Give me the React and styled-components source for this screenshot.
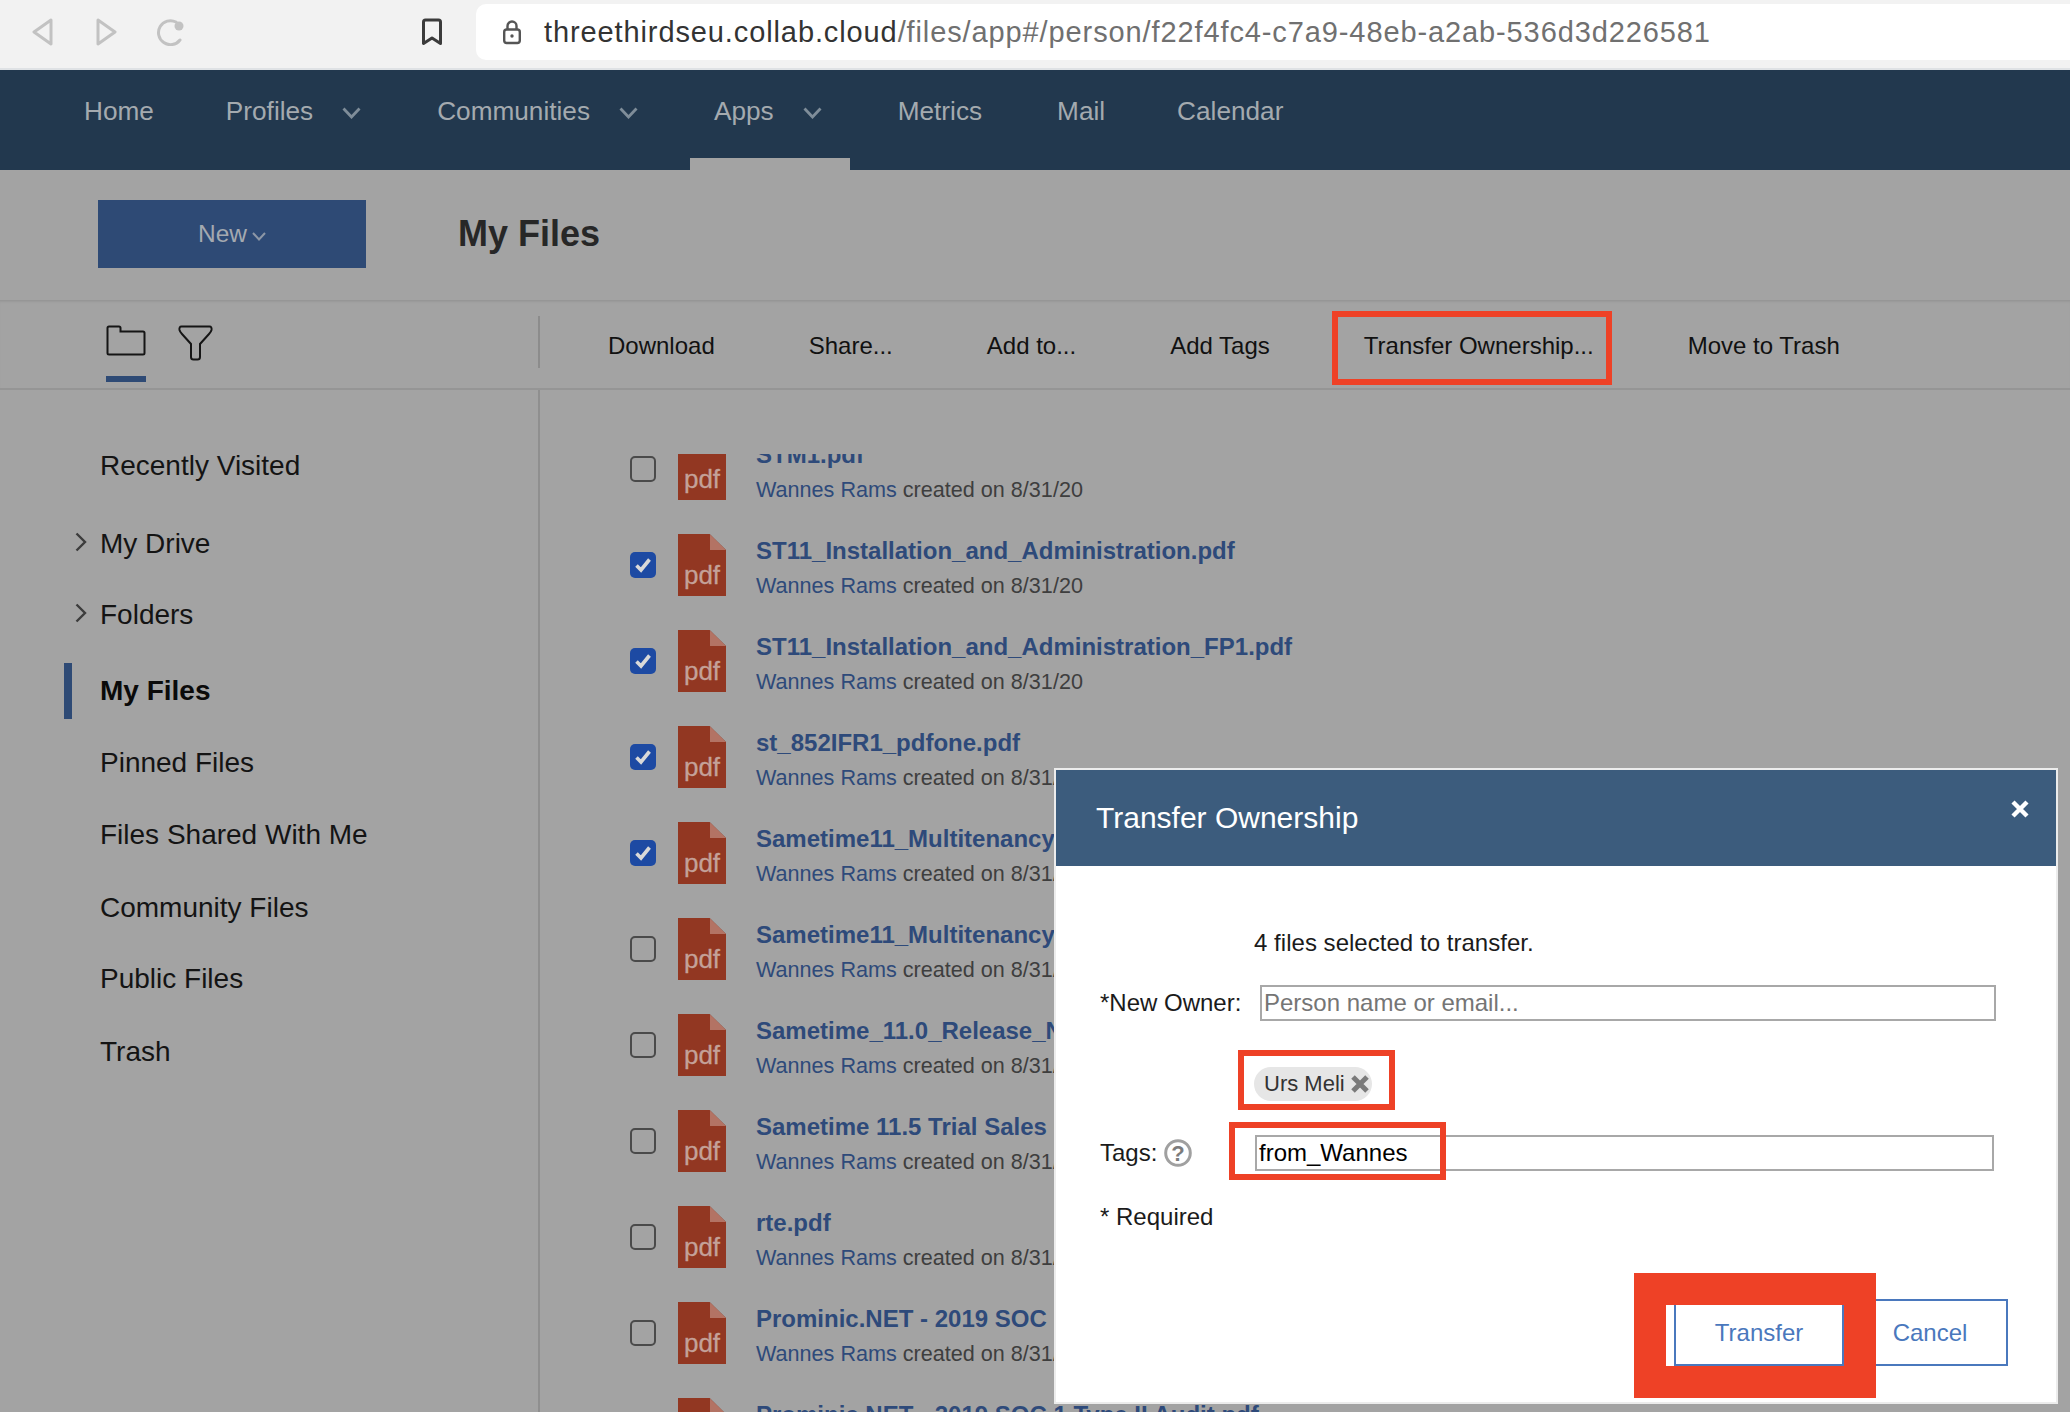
import React from "react";
import styled, { createGlobalStyle } from "styled-components";

const Global = createGlobalStyle`
  html, body { margin: 0; padding: 0; }
  body { width: 2070px; height: 1412px; overflow: hidden; background: #a3a3a3; font-family: "Liberation Sans", Arial, sans-serif; }
  * { box-sizing: border-box; }
`;

const Page = styled.div`
  position: relative;
  width: 2070px;
  height: 1412px;
  overflow: hidden;
  display: flex;
  flex-direction: column;
`;

/* Browser chrome */
const BrowserBar = styled.div`
  height: 70px;
  flex: none;
  display: flex;
  align-items: flex-start;
  background: #f2f2f2;
  border-bottom: 2px solid #dfe2e5;
`;
const ChromeIcon = styled.svg`
  flex: none;
  margin-top: 18px;
  margin-left: ${(p) => p.$ml}px;
  fill: none;
`;
const UrlField = styled.div`
  flex: 1;
  height: 56px;
  margin: 4px 0 0 33px;
  display: flex;
  align-items: center;
  padding-left: 27px;
  background: #fff;
  border-radius: 10px 0 0 10px;
`;
const UrlText = styled.div`
  margin-left: 23px;
  font-size: 29px;
  letter-spacing: 0.89px;
  color: #707070;
  white-space: nowrap;
  & > b { font-weight: 400; color: #333; }
`;

/* Main nav */
const Nav = styled.nav`
  height: 100px;
  flex: none;
  display: flex;
  padding-left: 60px;
  background: #22384e;
`;
const NavItem = styled.div`
  height: 100px;
  margin-right: ${(p) => p.$mr || 24}px;
  padding: 23px ${(p) => (p.$menu ? 28 : 24)}px 0 24px;
  display: flex;
  align-items: flex-start;
  font-size: 26.2px;
  line-height: 36px;
  color: #a4aaaf;
  border-bottom: 12px solid ${(p) => (p.$active ? "#a3a3a3" : "transparent")};
`;
const NavChevron = styled.svg`
  margin: 14px 0 0 29px;
  flex: none;
`;

/* Page header */
const Header = styled.header`
  height: 130px;
  flex: none;
  display: flex;
  align-items: flex-start;
  padding: 30px 0 0 98px;
  background: #a3a3a3;
`;
const NewButton = styled.div`
  width: 268px;
  height: 68px;
  display: flex;
  align-items: center;
  justify-content: center;
  gap: 5px;
  background: #2e4a75;
  color: #a4a9b0;
  font-size: 24.5px;
`;
const Title = styled.h1`
  margin: 0 0 0 92px;
  line-height: 68px;
  font-size: 36px;
  font-weight: 700;
  color: #272727;
`;

/* Toolbar */
const Toolbar = styled.div`
  height: 90px;
  flex: none;
  display: flex;
  background: #a3a3a3;
  border-bottom: 2px solid #959595;
  box-shadow: inset 0 3px 3px -2px rgba(0, 0, 0, 0.12);
`;
const ToolTabs = styled.div`
  width: 538px;
  flex: none;
  display: flex;
  padding: 25px 0 0 106px;
  gap: 32px;
`;
const ToolTab = styled.div`
  width: ${(p) => p.$w}px;
  display: flex;
  flex-direction: column;
  & > i { display: block; height: 6px; margin-top: 20px; background: #2e4a75; }
`;
const ToolDivider = styled.div`
  width: 2px;
  height: 52px;
  margin-top: 16px;
  flex: none;
  background: #8c8c8c;
`;
const Actions = styled.div`
  display: flex;
  align-items: center;
  gap: 94px;
  padding: 4px 0 0 68px;
`;
const Action = styled.span`
  position: relative;
  font-size: 24px;
  line-height: 36px;
  color: #111;
  white-space: nowrap;
`;
const Annotation = styled.span`
  position: absolute;
  top: ${(p) => p.$t}px;
  left: ${(p) => p.$l}px;
  right: ${(p) => p.$r}px;
  bottom: ${(p) => p.$b}px;
  border: ${(p) => p.$w || 6}px solid #ee4126;
  pointer-events: none;
`;

/* Body */
const Body = styled.div`
  flex: 1;
  min-height: 0;
  display: flex;
`;
const Sidebar = styled.aside`
  width: 540px;
  flex: none;
  padding-top: 40px;
  border-right: 2px solid #8f8f8f;
`;
const SideItem = styled.div`
  height: 72px;
  margin: ${(p) => p.$mt || 0}px 0 0 64px;
  display: flex;
  align-items: center;
  font-size: 28px;
  font-weight: ${(p) => (p.$active ? 700 : 400)};
  color: ${(p) => (p.$active ? "#0a0a0a" : "#141414")};
`;
const SideMarker = styled.div`
  width: 8px;
  height: 56px;
  flex: none;
  background: ${(p) => (p.$active ? "#2e4a75" : "transparent")};
`;
const SideCaret = styled.div`
  width: 28px;
  flex: none;
  display: flex;
  padding: 0 0 4px 3px;
`;

const ListClip = styled.div`
  flex: 1;
  min-width: 0;
  margin-top: 64px;
  overflow: hidden;
`;
const List = styled.div`
  margin-top: -33px;
  padding-left: 90px;
`;
const Row = styled.div`
  height: 96px;
  display: flex;
  align-items: center;
`;
const Check = styled.div`
  width: 26px;
  height: 26px;
  flex: none;
  display: flex;
  align-items: center;
  justify-content: center;
  border-radius: 5px;
  border: ${(p) => (p.$on ? "none" : "2px solid #4a4a4a")};
  background: ${(p) => (p.$on ? "#1d4aa3" : "transparent")};
`;
const PdfIcon = styled.div`
  position: relative;
  width: 48px;
  height: 62px;
  flex: none;
  margin-left: 22px;
  display: flex;
  align-items: flex-end;
  justify-content: center;
  padding-bottom: 7px;
  background: #923722;
  clip-path: polygon(0 0, 66% 0, 100% 26%, 100% 100%, 0 100%);
  color: #c4a199;
  font-size: 26px;
  line-height: 28px;
  -webkit-text-stroke: 0.3px #c4a199;
  &::after {
    content: "";
    position: absolute;
    top: 0;
    right: 0;
    width: 34%;
    height: 26%;
    background: #b37364;
    clip-path: polygon(0 0, 100% 100%, 0 100%);
  }
`;
const RowText = styled.div`
  margin-left: 30px;
  padding-top: 6px;
  white-space: nowrap;
`;
const FileName = styled.div`
  font-size: 24px;
  font-weight: 700;
  line-height: 36px;
  color: #2e4a7a;
`;
const FileMeta = styled.div`
  font-size: 21.6px;
  line-height: 34px;
  color: #3e3e3e;
  & > span { color: #2e4a7a; }
`;

/* Dialog */
const Dialog = styled.div`
  position: absolute;
  left: 1054px;
  top: 768px;
  width: 1004px;
  height: 636px;
  display: flex;
  flex-direction: column;
  background: #fff;
  border: 2px solid #ececec;
`;
const DialogHead = styled.div`
  position: relative;
  height: 96px;
  flex: none;
  display: flex;
  align-items: center;
  padding: 0 0 0 40px;
  background: #3c5c7d;
  color: #fff;
  font-size: 30px;
`;
const CloseBtn = styled.svg`
  position: absolute;
  top: 29px;
  right: 26px;
`;
const DialogBody = styled.div`
  flex: 1;
  display: flex;
  flex-direction: column;
  padding: 59px 48px 0 44px;
  font-size: 24px;
  line-height: 36px;
  color: #1b1b1b;
`;
const Note = styled.div`
  margin-left: 154px;
  letter-spacing: 0.03px;
`;
const FormRow = styled.div`
  display: flex;
  align-items: center;
  margin-top: ${(p) => p.$mt}px;
`;
const FieldLabel = styled.label`
  width: ${(p) => p.$w}px;
  flex: none;
  display: flex;
  align-items: center;
  gap: 7px;
`;
const TextField = styled.div`
  position: relative;
  width: ${(p) => p.$w}px;
  height: 36px;
  padding-left: 2px;
  border: 2px solid #a8a8a8;
  line-height: 32px;
  color: ${(p) => (p.$muted ? "#757575" : "#000")};
`;
const ChipWrap = styled.div`
  position: relative;
  margin: 46px 0 0 154px;
  align-self: flex-start;
`;
const Chip = styled.div`
  height: 34px;
  width: 118px;
  display: flex;
  align-items: center;
  justify-content: space-between;
  padding: 0 2px 0 10px;
  border-radius: 17px;
  background: #e6e6e6;
  font-size: 22px;
  color: #333;
`;
const Foot = styled.div`
  display: flex;
  justify-content: flex-end;
  margin-top: 64px;
`;
const ButtonBox = styled.div`
  position: relative;
  display: flex;
`;
const DlgButton = styled.div`
  width: ${(p) => p.$w}px;
  height: 67px;
  display: flex;
  align-items: center;
  justify-content: center;
  padding-left: ${(p) => p.$pl || 0}px;
  border: 2px solid #4a78bd;
  color: #4a78bd;
  font-size: 24px;
`;

const files = [
  ["STM1.pdf", false],
  ["ST11_Installation_and_Administration.pdf", true],
  ["ST11_Installation_and_Administration_FP1.pdf", true],
  ["st_852IFR1_pdfone.pdf", true],
  ["Sametime11_Multitenancy_Guide.pdf", true],
  ["Sametime11_Multitenancy_Admin.pdf", false],
  ["Sametime_11.0_Release_Notes.pdf", false],
  ["Sametime 11.5 Trial Sales Guide.pdf", false],
  ["rte.pdf", false],
  ["Prominic.NET - 2019 SOC 1 Type II.pdf", false],
  ["Prominic.NET - 2019 SOC 1 Type II Audit.pdf", false],
];

const side = [
  ["Recently Visited", 0],
  ["My Drive", 6, "caret"],
  ["Folders", -1, "caret"],
  ["My Files", 4, "active"],
  ["Pinned Files", 0],
  ["Files Shared With Me", 0],
  ["Community Files", 1],
  ["Public Files", -1],
  ["Trash", 1],
];

const Chevron = () => (
  <NavChevron width="19" height="12" viewBox="0 0 19 12">
    <path d="M1.5 1.5 L9.5 10 L17.5 1.5" fill="none" stroke="#7f8d99" strokeWidth="2.8" />
  </NavChevron>
);

export default function App() {
  return (
    <Page>
      <Global />
      <BrowserBar>
        <ChromeIcon $ml={31} width="22" height="28" viewBox="0 0 22 28">
          <path d="M20 2 L3 14 L20 26 Z" stroke="#c2c2c2" strokeWidth="3" strokeLinejoin="round" />
        </ChromeIcon>
        <ChromeIcon $ml={43} width="22" height="28" viewBox="0 0 22 28">
          <path d="M2 2 L19 14 L2 26 Z" stroke="#c2c2c2" strokeWidth="3" strokeLinejoin="round" />
        </ChromeIcon>
        <ChromeIcon $ml={38} width="30" height="28" viewBox="0 0 30 28">
          <path d="M24 22 A12 12 0 1 1 20 4" stroke="#c2c2c2" strokeWidth="3" strokeLinecap="round" />
          <circle cx="23" cy="8" r="4.5" fill="#c2c2c2" />
        </ChromeIcon>
        <ChromeIcon $ml={235} width="22" height="28" viewBox="0 0 22 28">
          <path d="M2.5 4 Q2.5 2 4.5 2 H17.5 Q19.5 2 19.5 4 V25.5 L11 20 L2.5 25.5 Z" stroke="#3b3b3b" strokeWidth="3" strokeLinejoin="round" />
        </ChromeIcon>
        <UrlField>
          <svg width="18" height="26" viewBox="0 0 18 26" fill="none">
            <path d="M4.5 11 V7 A4.5 4.5 0 0 1 13.5 7 V11" stroke="#555" strokeWidth="2.4" />
            <rect x="1.2" y="10.5" width="15.6" height="13.5" rx="2.5" stroke="#555" strokeWidth="2.4" />
            <circle cx="9" cy="17" r="1.7" fill="#555" />
          </svg>
          <UrlText>
            <b>threethirdseu.collab.cloud</b>/files/app#/person/f22f4fc4-c7a9-48eb-a2ab-536d3d226581
          </UrlText>
        </UrlField>
      </BrowserBar>

      <Nav>
        <NavItem>Home</NavItem>
        <NavItem $menu>Profiles<Chevron /></NavItem>
        <NavItem $menu>Communities<Chevron /></NavItem>
        <NavItem $menu $active>Apps<Chevron /></NavItem>
        <NavItem $mr={27}>Metrics</NavItem>
        <NavItem>Mail</NavItem>
        <NavItem>Calendar</NavItem>
      </Nav>

      <Header>
        <NewButton>
          New
          <svg width="14" height="9" viewBox="0 0 14 9" style={{ marginTop: 4 }}>
            <path d="M1 1 L7 7.5 L13 1" fill="none" stroke="#8d97a6" strokeWidth="2" />
          </svg>
        </NewButton>
        <Title>My Files</Title>
      </Header>

      <Toolbar>
        <ToolTabs>
          <ToolTab $w={40}>
            <svg width="40" height="31" viewBox="0 0 40 31" fill="none">
              <path d="M1.5 3 Q1.5 1.5 3 1.5 H13 Q14.5 1.5 14.5 3 V6.5 H37 Q38.5 6.5 38.5 8 V28 Q38.5 29.5 37 29.5 H3 Q1.5 29.5 1.5 28 Z" stroke="#151515" strokeWidth="2" />
            </svg>
            <i />
          </ToolTab>
          <ToolTab $w={35}>
            <svg width="35" height="36" viewBox="0 0 35 36" fill="none">
              <path d="M3.5 1.5 H31.5 Q34 1.5 33.5 5 Q33 7 31 9 L22 19 V32 Q22 34.5 19.5 34.5 H15.5 Q13 34.5 13 32 V19 L4 9 Q2 7 1.5 5 Q1 1.5 3.5 1.5 Z" stroke="#151515" strokeWidth="2" />
            </svg>
          </ToolTab>
        </ToolTabs>
        <ToolDivider />
        <Actions>
          <Action>Download</Action>
          <Action>Share...</Action>
          <Action>Add to...</Action>
          <Action>Add Tags</Action>
          <Action>
            Transfer Ownership...
            <Annotation $t={-17} $b={-21} $l={-32} $r={-18} />
          </Action>
          <Action>Move to Trash</Action>
        </Actions>
      </Toolbar>

      <Body>
        <Sidebar>
          {side.map(([label, mt, kind]) => (
            <SideItem key={label} $mt={mt} $active={kind === "active"}>
              <SideMarker $active={kind === "active"} />
              <SideCaret>
                {kind === "caret" && (
                  <svg width="12" height="20" viewBox="0 0 12 20">
                    <path d="M1.5 1.5 L10 10 L1.5 18.5" fill="none" stroke="#3c3c3c" strokeWidth="2.4" />
                  </svg>
                )}
              </SideCaret>
              {label}
            </SideItem>
          ))}
        </Sidebar>
        <ListClip>
          <List>
            {files.map(([name, on], i) => (
              <Row key={i}>
                <Check $on={on}>
                  {on && (
                    <svg width="18" height="16" viewBox="0 0 18 16">
                      <path d="M2.5 8.5 L7 13 L15.5 2.5" fill="none" stroke="#d9d9d9" strokeWidth="3.6" />
                    </svg>
                  )}
                </Check>
                <PdfIcon>pdf</PdfIcon>
                <RowText>
                  <FileName>{name}</FileName>
                  <FileMeta><span>Wannes Rams</span> created on 8/31/20</FileMeta>
                </RowText>
              </Row>
            ))}
          </List>
        </ListClip>
      </Body>

      <Dialog>
        <DialogHead>
          Transfer Ownership
          <CloseBtn width="20" height="20" viewBox="0 0 20 20">
            <path d="M3 3 L17 17 M17 3 L3 17" stroke="#fff" strokeWidth="4.4" />
          </CloseBtn>
        </DialogHead>
        <DialogBody>
          <Note>4 files selected to transfer.</Note>
          <FormRow $mt={24}>
            <FieldLabel $w={160}>*New Owner:</FieldLabel>
            <TextField $w={736} $muted>Person name or email...</TextField>
          </FormRow>
          <ChipWrap>
            <Chip>
              Urs Meli
              <svg width="20" height="20" viewBox="0 0 20 20">
                <path d="M3 3 L17 17 M17 3 L3 17" stroke="#7a7a7a" strokeWidth="5" />
              </svg>
            </Chip>
            <Annotation $t={-17} $b={-9} $l={-16} $r={-23} />
          </ChipWrap>
          <FormRow $mt={34}>
            <FieldLabel $w={155}>
              Tags:
              <svg width="28" height="28" viewBox="0 0 28 28" fill="none">
                <circle cx="14" cy="14" r="12.3" stroke="#a0a0a0" strokeWidth="3" />
                <text x="14" y="22" textAnchor="middle" fontSize="22" fontWeight="700" fontFamily="Liberation Sans" fill="#7c7c7c">?</text>
              </svg>
            </FieldLabel>
            <TextField $w={739}>
              from_Wannes
              <Annotation $t={-15} $b={-11} $r={546} $l={-28} />
            </TextField>
          </FormRow>
          <FormRow $mt={28}>* Required</FormRow>
          <Foot>
            <ButtonBox>
              <DlgButton $w={170}>Transfer</DlgButton>
              <Annotation $w={32} $t={-26} $b={-32} $l={-40} $r={-32} />
            </ButtonBox>
            <DlgButton $w={164} $pl={8}>Cancel</DlgButton>
          </Foot>
        </DialogBody>
      </Dialog>
    </Page>
  );
}
